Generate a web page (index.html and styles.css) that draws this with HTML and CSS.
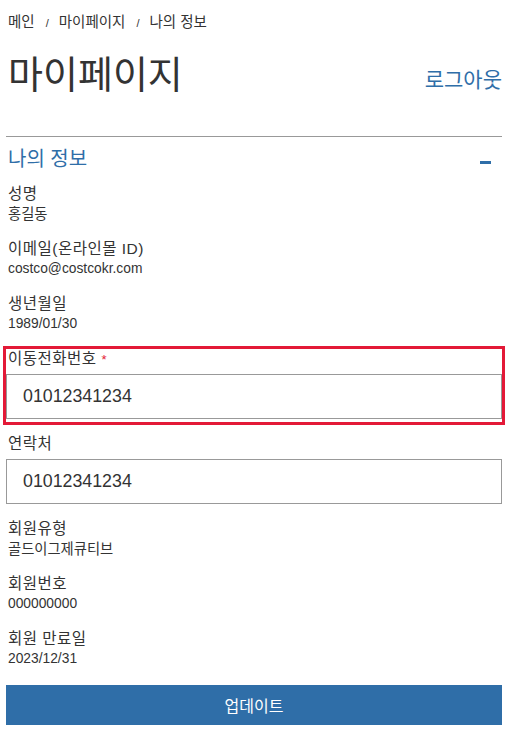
FILE: index.html
```html
<!DOCTYPE html>
<html lang="ko">
<head>
<meta charset="utf-8">
<title>마이페이지</title>
<link rel="stylesheet" href="styles.css">
</head>
<body>
<div class="page">
  <nav class="breadcrumb">
    <span>메인</span><span class="sep">/</span><span>마이페이지</span><span class="sep">/</span><span>나의 정보</span>
  </nav>
  <div class="header">
    <h1 class="title">마이페이지</h1>
    <a class="logout" href="#">로그아웃</a>
  </div>
  <hr class="rule">
  <div class="section-head">
    <h2 class="section-title">나의 정보</h2>
    <span class="minus"></span>
  </div>

  <div class="field">
    <div class="label">성명</div>
    <div class="value">홍길동</div>
  </div>
  <div class="field">
    <div class="label">이메일(온라인몰 ID)</div>
    <div class="value latin">costco@costcokr.com</div>
  </div>
  <div class="field">
    <div class="label">생년월일</div>
    <div class="value latin">1989/01/30</div>
  </div>

  <div class="highlight">
    <div class="label">이동전화번호 <span class="req">*</span></div>
    <input class="input" type="text" value="01012341234">
  </div>

  <div class="field-input">
    <div class="label">연락처</div>
    <input class="input" type="text" value="01012341234">
  </div>

  <div class="field">
    <div class="label">회원유형</div>
    <div class="value">골드이그제큐티브</div>
  </div>
  <div class="field">
    <div class="label">회원번호</div>
    <div class="value latin">000000000</div>
  </div>
  <div class="field last">
    <div class="label">회원 만료일</div>
    <div class="value latin">2023/12/31</div>
  </div>

  <button class="btn" type="button">업데이트</button>
</div>
</body>
</html>
```

FILE: styles.css
```css
* { box-sizing: border-box; }
html, body { margin: 0; padding: 0; background: #fff; }
body {
  font-family: "Liberation Sans", "Noto Sans CJK KR", sans-serif;
  color: #333;
}
.page {
  padding: 12px 7px 0 6px;
}
.breadcrumb {
  font-size: 14.5px;
  line-height: 20px;
  padding-left: 2px;
  color: #333;
}
.breadcrumb .sep {
  margin: 0 10px 0 11px;
  font-size: 11px;
}
.header {
  display: flex;
  justify-content: space-between;
  align-items: center;
  margin-top: 17px;
}
.title {
  margin: 0;
  font-weight: normal;
  font-size: 38px;
  line-height: 50px;
  padding-left: 2px;
  color: #333;
}
.logout {
  font-size: 21px;
  color: #2f6ea8;
  text-decoration: none;
  margin-top: 6px;
}
.rule {
  border: 0;
  border-top: 1px solid #999;
  margin: 36px 0 0 0;
  height: 0;
}
.section-head {
  display: flex;
  justify-content: space-between;
  align-items: center;
  margin-top: 10px;
}
.section-title {
  margin: 0;
  font-weight: normal;
  font-size: 20px;
  line-height: 24px;
  color: #2f6ea8;
  padding-left: 2px;
}
.minus {
  width: 11px;
  height: 3px;
  background: #2f6ea8;
  margin-right: 11px;
  margin-top: 6px;
}
.field {
  padding-left: 2px;
  margin-top: 13px;
}
.field + .field { margin-top: 15px; }
.label {
  font-size: 15.5px;
  line-height: 20px;
  letter-spacing: 0.5px;
  color: #333;
}
.value {
  font-size: 14.3px;
  line-height: 20px;
  color: #333;
}
.value.latin { font-size: 13.8px; }
.req { color: #e31937; font-size: 13px; }
.highlight {
  margin: 12px -3px 0 -3px;
  border: 3px solid #e31937;
  padding: 0 0 3px 0;
}
.highlight .label { padding-left: 2px; margin-bottom: 4px; }
.input {
  display: block;
  width: 100%;
  height: 45px;
  border: 1px solid #999;
  padding: 0 16px;
  font-family: "Liberation Sans", "Noto Sans CJK KR", sans-serif;
  font-size: 17.8px;
  color: #333;
  background: #fff;
  outline: none;
}
.field-input { margin-top: 9px; }
.field-input .label { padding-left: 2px; margin-bottom: 5px; }
.field-input + .field { margin-top: 15px; }
.btn {
  display: block;
  width: 100%;
  height: 40px;
  margin-top: 16px;
  border: 0;
  background: #2f6ea8;
  color: #fff;
  font-family: "Liberation Sans", "Noto Sans CJK KR", sans-serif;
  font-size: 16px;
  cursor: pointer;
}
```
